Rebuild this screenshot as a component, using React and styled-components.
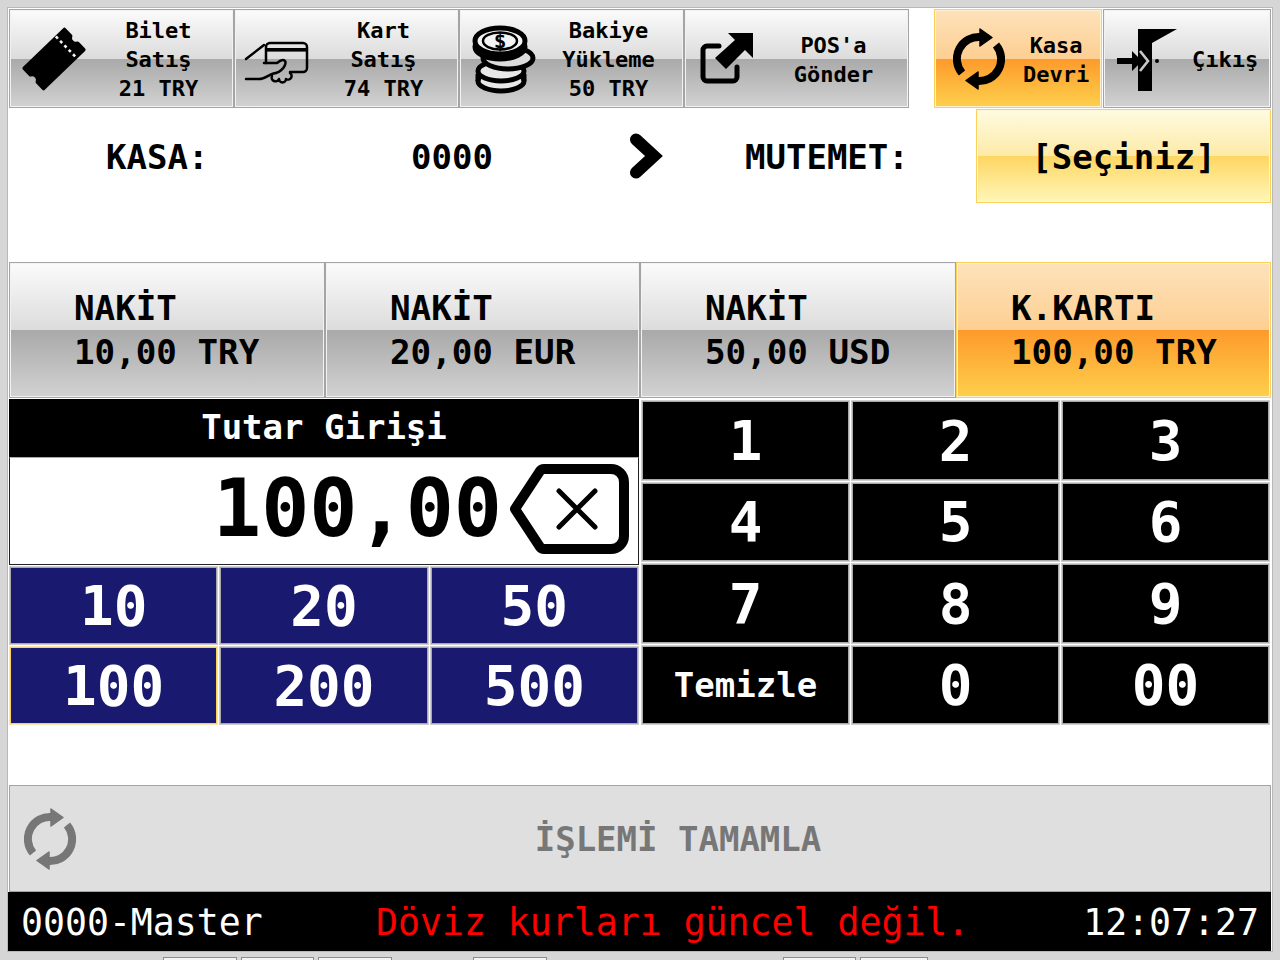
import styled, { createGlobalStyle, css } from 'styled-components';

const GlobalStyle = createGlobalStyle`
  html, body {
    margin: 0;
    padding: 0;
    background: #d6d6d6;
  }
`;

const tones = {
  gray: css`
    background: linear-gradient(#fbfbfb 0%, #dcdcdc 50%, #a9a9a9 50%, #d2d2d2 100%);
    border: 1px solid #a4a4a4;
    box-shadow: inset 0 0 0 1px #f2f2f2;
  `,
  orange: css`
    background: linear-gradient(#fee2bb 0%, #fdcf92 50%, #fd9a2b 50%, #fecf4c 100%);
    border: 1px solid #fbd15c;
    box-shadow: inset 0 0 0 1px #fff0d0;
  `,
  yellow: css`
    background: linear-gradient(#fffbe0 0%, #fdeaa8 50%, #fed662 50%, #fff6b8 100%);
    border: 1px solid #fbd15c;
    box-shadow: inset 0 0 0 1px #fff8d8;
  `,
};

const Page = styled.div`
  width: 1280px;
  height: 960px;
  box-sizing: border-box;
  padding: 8px 8px 0;
  overflow: hidden;
  background: #d6d6d6;
  font-family: "DejaVu Sans Mono", "Liberation Mono", monospace;
  color: #000;
`;

const Screen = styled.div`
  height: 943px;
  display: flex;
  flex-direction: column;
  background: #fff;
  box-shadow: 0 0 0 1px #b8b8b8;
`;

const TopBar = styled.div`
  display: flex;
  height: 99px;
  margin: 1px 0 0 1px;
`;

const Gloss = styled.div`
  box-sizing: border-box;
  ${({ $tone }) => tones[$tone || 'gray']}
`;

const TopButton = styled(Gloss)`
  width: ${({ $width }) => $width}px;
  margin-left: ${({ $push }) => $push || 0}px;
  display: flex;
  align-items: center;
  padding-right: 14px;
`;

const IconCell = styled.div`
  width: 88px;
  flex-shrink: 0;
  display: flex;
  justify-content: center;
  align-items: center;
`;

const TopLabel = styled.div`
  flex: 1;
  padding-top: 2px;
  text-align: center;
  font-size: 22px;
  font-weight: 700;
  line-height: 29px;
`;

const KasaRow = styled.div`
  display: grid;
  grid-template-columns: 305px 219px 115px 231px 295px;
  align-items: center;
  height: 94px;
  margin-top: 1px;
  padding-left: 98px;
  font-size: 34px;
  font-weight: 700;
`;

const KasaText = styled.div`
  padding-top: 1px;
`;

const SelectButton = styled(Gloss)`
  height: 94px;
  padding-top: 2px;
  display: flex;
  align-items: center;
  justify-content: center;
`;

const Payments = styled.div`
  display: grid;
  grid-template-columns: 316px 315px 316px 315px;
  height: 136px;
  margin: 59px 0 0 1px;
`;

const PayButton = styled(Gloss)`
  padding-left: ${({ $pad }) => $pad}px;
  display: flex;
  flex-direction: column;
  justify-content: center;
  font-size: 34.2px;
  font-weight: 700;
  line-height: 44px;
`;

const Middle = styled.div`
  display: grid;
  grid-template-columns: 630px 629px;
  gap: 2px;
  margin: 1px 0 0 1px;
`;

const Entry = styled.div`
  display: flex;
  flex-direction: column;
`;

const EntryTitle = styled.div`
  height: 58px;
  background: #000;
  color: #fff;
  font-size: 34px;
  font-weight: 700;
  line-height: 56px;
  text-align: center;
`;

const EntryValue = styled.div`
  box-sizing: border-box;
  height: 108px;
  border: 1px solid #222;
  border-top-color: #aaa;
  display: flex;
  align-items: center;
  justify-content: flex-end;
  gap: 6px;
  padding: 0 8px 5px 0;
  font-size: 80px;
  font-weight: 700;
`;

const KeyGrid = styled.div`
  display: grid;
  grid-template-columns: repeat(3, 1fr);
  gap: 3px;
  margin: 2px 1px 0;
  grid-auto-rows: ${({ $quick }) => ($quick ? '77px' : '78.5px')};
`;

const Key = styled.div`
  box-sizing: border-box;
  border: 1px solid ${({ $selected }) => ($selected ? '#fbd15c' : '#a8a8a8')};
  box-shadow: 0 0 0 1px ${({ $selected }) => ($selected ? '#fde7a8' : '#cfcfcf')};
  background: ${({ $quick }) => ($quick ? '#191970' : '#000')};
  color: #fff;
  font-size: ${({ $small }) => ($small ? 34 : 56)}px;
  font-weight: 700;
  display: flex;
  align-items: center;
  justify-content: center;
`;

const Complete = styled.div`
  box-sizing: border-box;
  height: 107px;
  margin: 61px 0 0 1px;
  width: 1262px;
  background: #dfdfdf;
  border: 1px solid #a4a4a4;
  color: #777;
  display: flex;
  align-items: center;
  font-size: 34px;
  font-weight: 700;
`;

const CompleteIcon = styled.div`
  width: 76px;
  padding-left: 14px;
  box-sizing: border-box;
  display: flex;
`;

const CompleteText = styled.div`
  flex: 1;
  text-align: center;
`;

const StatusBar = styled.div`
  display: grid;
  grid-template-columns: 355px 1fr auto;
  align-items: center;
  height: 59px;
  margin-right: 1px;
  padding: 1px 12px 0 13px;
  box-sizing: border-box;
  background: #000;
  color: #fff;
  font-size: 36.5px;
`;

const Warning = styled.div`
  color: #ff0000;
`;

const Tabs = styled.div`
  display: flex;
  height: 3px;
  margin-top: 6px;
`;

const Tab = styled.div`
  box-sizing: border-box;
  width: ${({ $w }) => $w}px;
  margin-left: ${({ $gap }) => $gap}px;
  background: #f4f4f4;
  border: 1px solid #8c8c8c;
  border-bottom: 0;
`;

const TicketIcon = () => (
  <svg width="70" height="70" viewBox="0 0 70 70">
    <g transform="rotate(-44 35 35)">
      <path
        fill="#000"
        d="M7 21 H63 V30 A5.5 5.5 0 0 0 63 40 V49 H7 V40 A5.5 5.5 0 0 0 7 30 Z"
        stroke="#000"
        strokeWidth="3.5"
        strokeLinejoin="round"
      />
      <line x1="52" y1="20" x2="52" y2="50" stroke="#f2f2f2" strokeWidth="2.6" strokeDasharray="3 3.2" />
    </g>
  </svg>
);

const CardIcon = () => (
  <svg width="80" height="60" viewBox="0 0 80 60" fill="none" stroke="#000" strokeWidth="2.5" strokeLinecap="round" strokeLinejoin="round">
    <path d="M27 34 V18 a4 4 0 0 1 4 -4 H64 a4 4 0 0 1 4 4 V39 a4 4 0 0 1 -4 4 H51" />
    <rect x="28" y="19" width="40" height="3.6" fill="#000" stroke="none" />
    <path d="M7 30 L25 16" />
    <path d="M25 34 H38 C44 29 48 31 46 36 C45 39 41 43 37 44" />
    <path d="M7 50 H20 C27 50 31 44 37 44" />
    <path d="M33 47 a3.5 3.5 0 0 0 7 3 a3.5 3.5 0 0 0 7 0 a3.5 3.5 0 0 0 4 -6" />
  </svg>
);

const CoinsIcon = () => (
  <svg width="70" height="70" viewBox="0 0 70 70" stroke="#000" strokeWidth="5">
    <ellipse cx="32" cy="57" rx="23" ry="10" fill="#e8e8e8" />
    <path d="M9 50 V57 M55 50 V57" />
    <ellipse cx="32" cy="47" rx="23" ry="10" fill="#e8e8e8" />
    <ellipse cx="39" cy="34" rx="25" ry="11" fill="#dcdcdc" />
    <ellipse cx="31" cy="23" rx="25" ry="12" fill="#000" />
    <ellipse cx="31" cy="17" rx="25" ry="13" fill="#f4f4f4" />
    <ellipse cx="31" cy="17" rx="17" ry="8.5" fill="none" strokeWidth="2.5" />
    <text x="31" y="24" textAnchor="middle" fontSize="21" fontWeight="700" fontFamily="DejaVu Sans Mono" fill="#000" stroke="none">$</text>
  </svg>
);

const ShareIcon = () => (
  <svg width="60" height="60" viewBox="0 0 60 60">
    <path d="M20 17 H8 a4 4 0 0 0 -4 4 V48 a4 4 0 0 0 4 4 H34 a4 4 0 0 0 4 -4 V38" fill="none" stroke="#000" strokeWidth="5" strokeLinecap="round" />
    <path d="M54 4 V29 L46 21 L27 40 L16 29 L36 11 L29 4 Z" fill="#000" />
  </svg>
);

const SyncIcon = ({ color }) => (
  <svg width="52" height="62" viewBox="0 0 52 62" fill="none">
    <path d="M9 45 A22 22 0 0 1 28 9" stroke={color} strokeWidth="8" />
    <path d="M27 1 L39 9.5 L27 18 Z" fill={color} stroke={color} strokeWidth="1.5" strokeLinejoin="round" />
    <path d="M43 17 A22 22 0 0 1 24 53" stroke={color} strokeWidth="8" />
    <path d="M25 44 L13 52.5 L25 61 Z" fill={color} stroke={color} strokeWidth="1.5" strokeLinejoin="round" />
  </svg>
);

const ExitIcon = () => (
  <svg width="70" height="70" viewBox="0 0 70 70">
    <path d="M25 5 H64 L39 19 V67 H25 Z" fill="#000" />
    <path d="M4 34 H19 V27 L29 37 L19 47 V40 H4 Z" fill="#000" />
    <path d="M27 27 L35 37 L27 47" fill="none" stroke="#c8c8c8" strokeWidth="2.6" />
    <circle cx="44" cy="37" r="2" fill="#000" />
  </svg>
);

const ChevronIcon = () => (
  <svg width="40" height="52" viewBox="0 0 40 52" fill="none">
    <path d="M6 9.5 L24 26 L6 42.5" stroke="#000" strokeWidth="12" strokeLinecap="round" strokeLinejoin="miter" />
  </svg>
);

const BackspaceIcon = () => (
  <svg width="122" height="92" viewBox="0 0 122 92" fill="none" stroke="#000">
    <path d="M36 6 H103 a13 13 0 0 1 13 13 V73 a13 13 0 0 1 -13 13 H36 a5 5 0 0 1 -4 -2 L7 46 L32 8 a5 5 0 0 1 4 -2 Z" strokeWidth="10" strokeLinejoin="round" />
    <path d="M51 28 L87 64 M87 28 L51 64" strokeWidth="5" strokeLinecap="round" />
  </svg>
);

const topButtons = [
  { icon: <TicketIcon />, lines: ['Bilet', 'Satış', '21 TRY'], width: 225 },
  { icon: <CardIcon />, lines: ['Kart', 'Satış', '74 TRY'], width: 225 },
  { icon: <CoinsIcon />, lines: ['Bakiye', 'Yükleme', '50 TRY'], width: 225 },
  { icon: <ShareIcon />, lines: ["POS'a", 'Gönder'], width: 225 },
  { icon: <SyncIcon color="#000" />, lines: ['Kasa', 'Devri'], width: 168, tone: 'orange', push: 25 },
  { icon: <ExitIcon />, lines: ['Çıkış'], width: 168, push: 1 },
];

const payments = [
  { title: 'NAKİT', amount: '10,00 TRY', pad: 64 },
  { title: 'NAKİT', amount: '20,00 EUR', pad: 64 },
  { title: 'NAKİT', amount: '50,00 USD', pad: 64 },
  { title: 'K.KARTI', amount: '100,00 TRY', pad: 54, tone: 'orange' },
];

const quickAmounts = ['10', '20', '50', '100', '200', '500'];
const keys = ['1', '2', '3', '4', '5', '6', '7', '8', '9', 'Temizle', '0', '00'];
const tabs = [
  { gap: 155, w: 74 },
  { gap: 4, w: 73 },
  { gap: 4, w: 74 },
  { gap: 81, w: 74 },
  { gap: 236, w: 73 },
  { gap: 4, w: 68 },
];

function App() {
  return (
    <Page>
      <GlobalStyle />
      <Screen>
        <TopBar>
          {topButtons.map((b) => (
            <TopButton key={b.lines[0]} $width={b.width} $tone={b.tone} $push={b.push}>
              <IconCell>{b.icon}</IconCell>
              <TopLabel>
                {b.lines.map((line) => (
                  <div key={line}>{line}</div>
                ))}
              </TopLabel>
            </TopButton>
          ))}
        </TopBar>

        <KasaRow>
          <KasaText>KASA:</KasaText>
          <KasaText>0000</KasaText>
          <ChevronIcon />
          <KasaText>MUTEMET:</KasaText>
          <SelectButton $tone="yellow">[Seçiniz]</SelectButton>
        </KasaRow>

        <Payments>
          {payments.map((p) => (
            <PayButton key={p.amount} $pad={p.pad} $tone={p.tone}>
              <div>{p.title}</div>
              <div>{p.amount}</div>
            </PayButton>
          ))}
        </Payments>

        <Middle>
          <Entry>
            <EntryTitle>Tutar Girişi</EntryTitle>
            <EntryValue>
              100,00
              <BackspaceIcon />
            </EntryValue>
            <KeyGrid $quick>
              {quickAmounts.map((a) => (
                <Key key={a} $quick $selected={a === '100'}>
                  {a}
                </Key>
              ))}
            </KeyGrid>
          </Entry>
          <KeyGrid>
            {keys.map((k) => (
              <Key key={k} $small={k === 'Temizle'}>
                {k}
              </Key>
            ))}
          </KeyGrid>
        </Middle>

        <Complete>
          <CompleteIcon>
            <SyncIcon color="#777" />
          </CompleteIcon>
          <CompleteText>İŞLEMİ TAMAMLA</CompleteText>
        </Complete>

        <StatusBar>
          <div>0000-Master</div>
          <Warning>Döviz kurları güncel değil.</Warning>
          <div>12:07:27</div>
        </StatusBar>
      </Screen>
      <Tabs>
        {tabs.map((t) => (
          <Tab key={t.gap + '-' + t.w} $gap={t.gap} $w={t.w} />
        ))}
      </Tabs>
    </Page>
  );
}

export default App;
